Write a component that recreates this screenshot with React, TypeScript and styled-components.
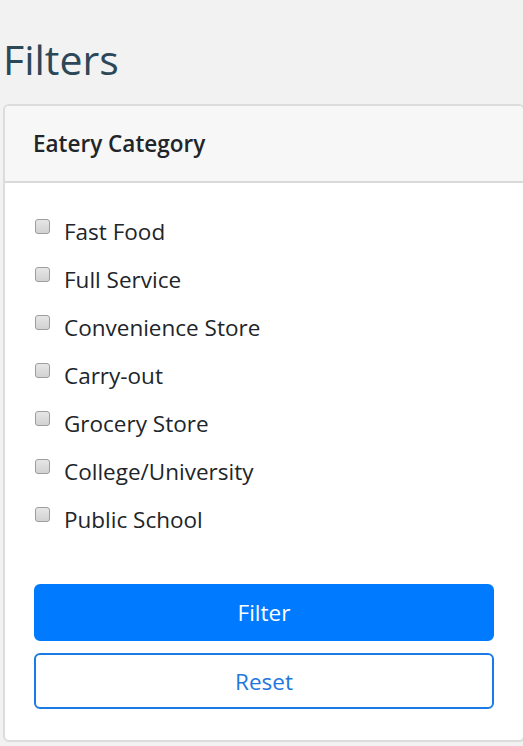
import React from 'react'
import styled, { createGlobalStyle } from 'styled-components'

const GlobalStyle = createGlobalStyle`
  html, body {
    margin: 0;
    padding: 0;
    background: #f2f2f2;
    overflow: hidden;
  }
  body {
    font-family: "Open Sans", "Noto Sans", sans-serif;
    color: #212529;
  }
`

const Page = styled.div`
  padding: 35px 0 0 3px;
  width: 522px;
`

const Title = styled.h1`
  margin: 0 0 20px 0;
  font-size: 41px;
  line-height: 49px;
  font-weight: 400;
  color: #2c4858;
`

const Card = styled.section`
  box-sizing: border-box;
  width: 522px;
  background: #fff;
  border: 2px solid #dcdcdc;
  border-radius: 6px;
  overflow: hidden;
`

const CardHeader = styled.header`
  display: flex;
  align-items: center;
  height: 75px;
  padding: 0 28px;
  background: #f7f7f7;
  border-bottom: 2px solid #d9d9d9;
  font-size: 22.5px;
  font-weight: 600;
  color: #212529;
`

const CardBody = styled.div`
  padding: 31px 29px 31px;
`

const List = styled.ul`
  list-style: none;
  margin: 0;
  padding: 0;
  display: flex;
  flex-direction: column;
  gap: 12px;
`

const Item = styled.li`
  display: flex;
  align-items: flex-start;
  gap: 14px;
  font-size: 22.5px;
  line-height: 36px;
`

const Check = styled.input.attrs({ type: 'checkbox' })`
  appearance: none;
  box-sizing: border-box;
  width: 15px;
  height: 15px;
  margin: 5px 0 0 1px;
  flex: none;
  border: 1px solid #9c9c9c;
  border-radius: 3px;
  background: linear-gradient(#e6e6e6, #d2d2d2);
`

const Actions = styled.div`
  display: flex;
  flex-direction: column;
  gap: 12px;
  margin-top: 46px;
`

const Button = styled.button<{ $outline?: boolean }>`
  box-sizing: border-box;
  width: 460px;
  height: ${p => (p.$outline ? 56 : 57)}px;
  border-radius: 6px;
  font-family: inherit;
  font-size: 22.5px;
  font-weight: 400;
  cursor: pointer;
  border: 2px solid ${p => (p.$outline ? '#1a7be6' : '#007bff')};
  background: ${p => (p.$outline ? '#fff' : '#007bff')};
  color: ${p => (p.$outline ? '#1f78e0' : '#fff')};
`

const categories = [
  'Fast Food',
  'Full Service',
  'Convenience Store',
  'Carry-out',
  'Grocery Store',
  'College/University',
  'Public School',
]

export default function App() {
  return (
    <Page>
      <GlobalStyle />
      <Title>Filters</Title>
      <Card>
        <CardHeader>Eatery Category</CardHeader>
        <CardBody>
          <List>
            {categories.map(c => (
              <Item key={c}>
                <Check />
                <span>{c}</span>
              </Item>
            ))}
          </List>
          <Actions>
            <Button>Filter</Button>
            <Button $outline>Reset</Button>
          </Actions>
        </CardBody>
      </Card>
    </Page>
  )
}
